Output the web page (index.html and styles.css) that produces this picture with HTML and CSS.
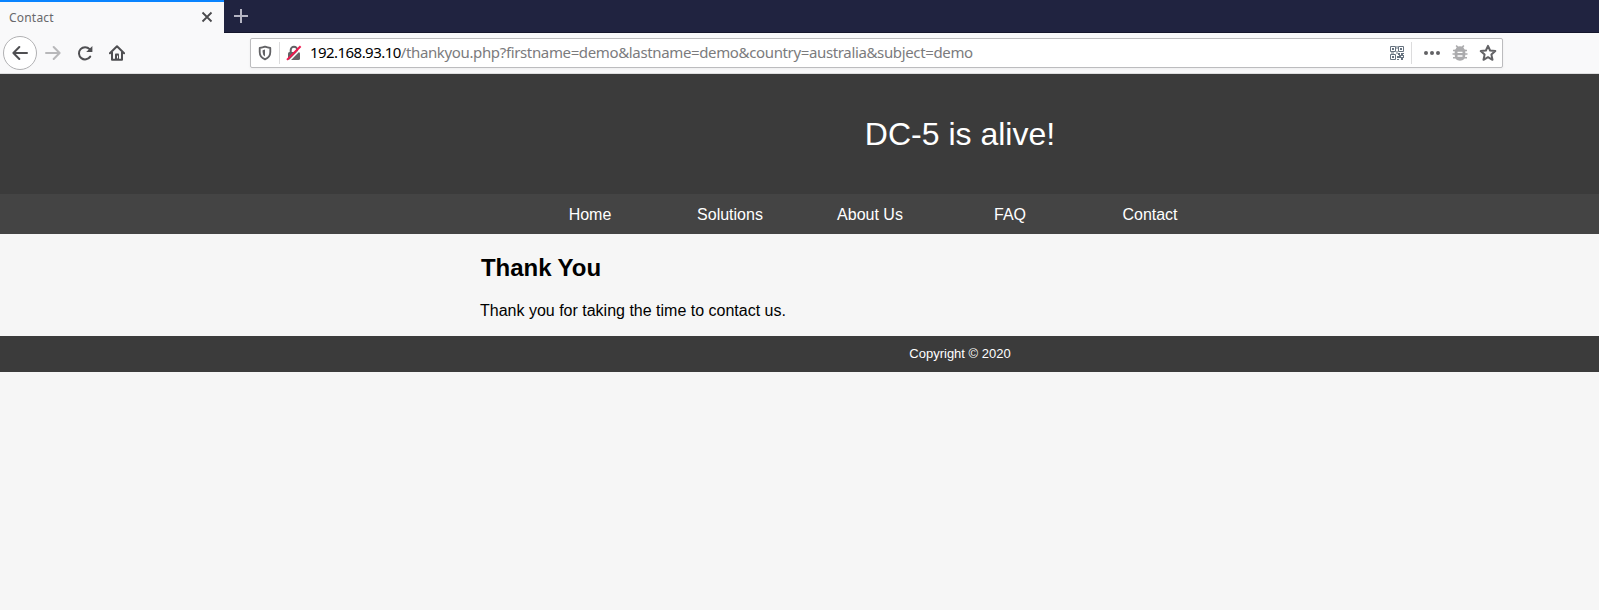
FILE: index.html
```html
<!DOCTYPE html>
<html lang="en">
<head>
<meta charset="utf-8">
<title>Contact</title>
<link rel="stylesheet" href="styles.css">
</head>
<body>
<div class="tabs">
  <div class="tab"><span class="tab-title">Contact</span>
    <svg class="close" width="12" height="12" viewBox="0 0 12 12"><path d="M1.500 1.500l9 9M10.500 1.500l-9 9"/></svg>
  </div>
  <svg class="plus" width="14" height="14" viewBox="0 0 14 14"><path d="M7 0v14M0 7h14"/></svg>
</div>
<div class="toolbar">
  <div class="back"><svg width="16" height="16" viewBox="0 0 16 16"><path d="M15 8H1.8M7.3 2L1.4 8l5.9 6"/></svg></div>
  <svg class="tool forward" width="16" height="16" viewBox="0 0 16 16"><path d="M1 8h13.2M8.7 2l5.9 6-5.9 6"/></svg>
  <svg class="tool reload" width="16" height="16" viewBox="0 0 16 16"><path d="M13.2 11.6A6.1 6.1 0 1 1 12.6 4.2"/><path class="solid" d="M15.4 1v6H9.2z"/></svg>
  <svg class="tool home" width="16" height="16" viewBox="0 0 16 16"><path d="M.9 8.3L8 1.3l7.1 7M3 7.3v7.4h10V7.3"/><path class="solid" d="M6 15V9.2q0-.8.8-.8h2.400q.8 0 .8.8V15z"/><path class="knob" d="M8.500 11v2"/></svg>
  <div class="url">
    <svg class="shield" width="14" height="16" viewBox="0 0 14 16"><path d="M1.700 3Q4.500 2.700 7 1.700q2.500 1 5.300 1.300V7q0 5.200-5.300 7.300Q1.700 12.200 1.700 7z"/><path class="half" d="M7 4.600v7Q4.600 10.200 4.600 7V5.200z"/></svg>
    <span class="rule"></span>
    <svg class="lock" width="16" height="16" viewBox="0 0 16 16"><path class="shackle" d="M4.700 7V5a3.300 3.300 0 0 1 6.600 0v2"/><path class="body" d="M3.500 7h9q1.500 0 1.500 1.500v5q0 1.500-1.500 1.500h-9Q2 15 2 13.500v-5Q2 7 3.500 7z"/><path class="gap" d="M2.700 16.300L16.100 2.900"/><path class="slash" d="M1 14.900L14.600 1.300"/></svg>
    <span class="address"><span class="host">192.168.93.10</span><span class="path">/thankyou.php?firstname=demo&amp;lastname=demo&amp;country=australia&amp;subject=demo</span></span>
    <svg class="qr" width="14" height="14" viewBox="0 0 14 14"><path class="eye" d="M.5.5h5v5h-5zM8.500.5h5v5h-5zM.5 8.500h5v5h-5z"/><path d="M2 2h2v2H2zM10 2h2v2h-2zM2 10h2v2H2zM6.500 0h1v3h-1zM6.500 5h1v3h-1zM1 6.500h3v1H1zM8 7h2v2H8zM11 7h3v1h-1v2h-2zM7 10h2v2H7zM9 9h2v2H9zM11 11h2v-2h1v3h-1v2h-2v-2H9v2H7v-1h2v-2h2z"/></svg>
    <span class="rule"></span>
    <svg class="dots" width="16" height="4" viewBox="0 0 16 4"><circle cx="2" cy="2" r="2"/><circle cx="8" cy="2" r="2"/><circle cx="14" cy="2" r="2"/></svg>
    <svg class="bug" width="16" height="16" viewBox="0 0 16 16"><path class="legs" d="M1 5.500h14M.5 9h15M1 12.700h14M4.200.5L6 2.700M11.800.5L10 2.700"/><path d="M3.500 5Q4 1.200 8 1.200T12.500 5z"/><path d="M2.700 4.500h10.600V10q0 5.700-5.300 5.700T2.700 10z"/><path class="stripe" d="M5.500 7.300h5M5.500 11h5"/></svg>
    <svg class="star" width="18" height="18" viewBox="0 0 18 18"><path d="M9 1.800l2.100 4.700 5.200.6-3.900 3.500 1.100 5.200L9 13.200l-4.500 2.600 1.100-5.200L1.700 7.100l5.200-.6z"/></svg>
  </div>
</div>
<main class="page">
  <header class="banner"><div class="wrap">DC-5 is alive!</div></header>
  <nav class="nav"><div class="wrap links"><a>Home</a><a>Solutions</a><a>About Us</a><a>FAQ</a><a>Contact</a></div></nav>
  <section class="content"><div class="wrap"><h2>Thank You</h2><p>Thank you for taking the time to contact us.</p></div></section>
  <footer class="footer"><div class="wrap">Copyright © 2020</div></footer>
</main>
</body>
</html>
```
FILE: styles.css
```css
* { box-sizing: border-box; }
body { margin: 0; height: 610px; overflow: hidden; background: #f6f6f6; font: 16px "Liberation Sans", Arial, sans-serif; color: #000; }
svg { display: block; flex: none; fill: none; }
.tabs { height: 33px; display: flex; background: #202340; border-bottom: 1px solid #14162c; }
.tab { width: 224px; height: 33px; border-top: 2px solid #0a84ff; background: #f9f9fa; display: flex; align-items: center; justify-content: space-between; padding: 0 11px 1px 9px; flex: none; }
.tab-title { font: 12px "Noto Sans", sans-serif; color: #68686b; letter-spacing: .2px; }
.close { stroke: #4a4a4d; stroke-width: 1.800px; }
.plus { margin: 9px 0 0 10px; stroke: #b5b5c3; stroke-width: 2; }
.toolbar { height: 41px; background: #f9f9fa; border-bottom: 1px solid #dededf; display: flex; align-items: center; padding-left: 3px; }
.back { width: 34px; height: 34px; border: 1px solid #b1b1b3; border-radius: 50%; background: #fff; display: flex; align-items: center; justify-content: center; }
.back svg, .tool { stroke: #4f4f52; stroke-width: 2; stroke-linecap: round; stroke-linejoin: round; }
.tool { margin-left: 16px; }
.forward { stroke: #b8b8ba; margin-left: 8px; }
.tool .solid { fill: #4f4f52; stroke: none; }
.home .knob { stroke: #f9f9fa; stroke-width: 1; }
.url { width: 1253px; height: 30px; margin-left: 125px; background: #fff; border: 1px solid #bcbcbe; border-radius: 2px; display: flex; align-items: center; padding: 0 5px 0 7px; box-shadow: 0 1px 3px #0000000d; }
.rule { width: 1px; height: 22px; background: #dcdcdd; flex: none; margin-left: 7px; }
.shield { stroke: #626265; stroke-width: 1.800px; stroke-linejoin: round; }
.half { fill: #626265; stroke: none; }
.lock { margin-left: 6px; }
.shackle { stroke: #626265; stroke-width: 2; }
.body { fill: #626265; }
.gap { stroke: #fff; stroke-width: 1.500px; }
.slash { stroke: #f0194f; stroke-width: 2; }
.address { margin-left: 8px; flex: 1; white-space: nowrap; font: 15px/26px "Noto Sans", sans-serif; padding-bottom: 2px; }
.host { letter-spacing: -.55px; }
.path { color: #7b7b7d; letter-spacing: -.36px; }
.qr { fill: #66727f; }
.eye { fill: none; stroke: #66727f; }
.dots { fill: #626265; margin-left: 12px; }
.bug { fill: #ababad; margin-left: 12px; }
.legs { stroke: #ababad; stroke-width: 1.600px; }
.stripe { stroke: #fff; stroke-width: 1.300px; }
.star { stroke: #626265; stroke-width: 2; stroke-linejoin: round; margin-left: 11px; }
.wrap { width: 960px; margin-left: 480px; }
.banner { height: 120px; line-height: 120px; font-size: 32px; text-align: center; color: #fff; background: #3b3b3b; }
.nav { height: 40px; background: #444; color: #fff; }
.links { display: flex; padding-left: 40px; line-height: 42px; }
.links a { width: 140px; height: 40px; text-align: center; }
.content { height: 102px; padding-top: 20px; }
h2 { margin: 0; font-size: 24px; line-height: 28px; padding-left: 1px; letter-spacing: -.05px; }
p { margin: 20px 0 0; line-height: 18px; }
.footer { height: 36px; line-height: 35px; font-size: 13px; text-align: center; color: #fff; background: #3b3b3b; }
```
